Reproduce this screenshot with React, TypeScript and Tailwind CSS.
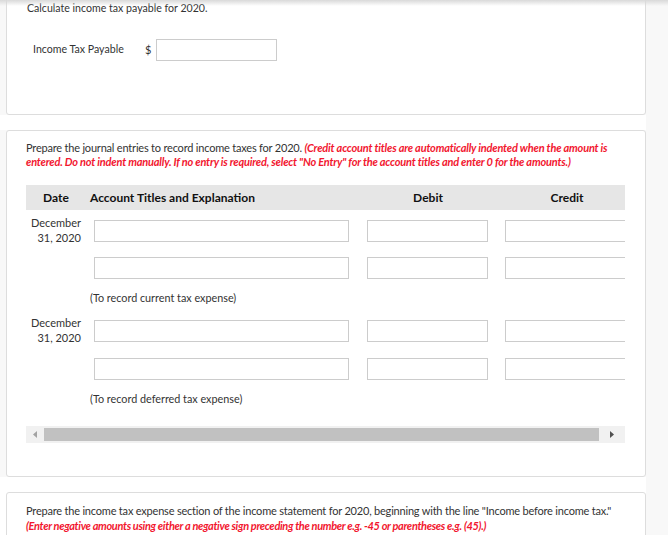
import React from "react";

const font = { fontFamily: "Lato, 'Open Sans', sans-serif" };

function Box({ className = "" }: { className?: string }) {
  return <div className={`h-[22px] border border-[#cccccc] bg-white ${className}`} />;
}

function EntryRow({ date, className = "" }: { date?: boolean; className?: string }) {
  return (
    <div className={`flex items-start h-[22px] ${className}`}>
      <div className="w-[55px] h-[27px] shrink-0 text-right text-[11px] leading-[15px] text-[#333] -mt-[5px]">
        {date && (
          <>
            December
            <br />
            31, 2020
          </>
        )}
      </div>
      <Box className="ml-[13px] w-[255px]" />
      <Box className="ml-[18px] w-[121px]" />
      <Box className="ml-[17px] w-[120px] border-r-0" />
    </div>
  );
}

export default function App() {
  return (
    <div className="relative w-[668px] h-[535px] overflow-hidden bg-white text-[#333]" style={font}>
      {/* top bar shadow */}
      <div className="absolute left-0 top-0 w-full h-[6px] bg-gradient-to-b from-[#d9d9d9] to-transparent z-10" />
      {/* right gutter */}
      <div className="absolute right-0 top-0 w-[22px] h-full bg-[#f8f8f8]" />

      {/* Card 1 */}
      <div className="flex -mt-[20px] bg-[#f8f8f8] w-[646px]">
        <div className="ml-[6px] w-[640px] h-[135px] bg-white border border-[#dddddd] rounded-[3px] px-[20px] pt-[20px]">
          <p className="text-[10.6px] leading-[14px]">Calculate income tax payable for 2020.</p>
          <div className="flex items-center mt-[24px] ml-[6px]">
            <span className="text-[10.6px] w-[112px]">Income Tax Payable</span>
            <span className="text-[11px] w-[11px]">$</span>
            <div className="h-[22px] w-[121px] border border-[#cccccc]" />
          </div>
        </div>
      </div>

      <div className="h-[15px]" />

      {/* Card 2 */}
      <div className="flex bg-[#f8f8f8] w-[646px]">
        <div className="ml-[6px] w-[640px] h-[347px] bg-white border border-[#dddddd] rounded-[3px] pl-[19px] pt-[10px]">
          <p className="text-[11px] leading-[14px] tracking-[-0.2px]">
            Prepare the journal entries to record income taxes for 2020.{" "}
            <em className="font-bold text-[#f2172f]">
              (Credit account titles are automatically indented when the amount is
              <br />
              entered. Do not indent manually. If no entry is required, select "No Entry" for the account titles and enter 0 for the amounts.)
            </em>
          </p>

          <div className="mt-[16px] w-[599px]">
            <div className="flex items-center h-[25px] bg-[#e6e6e6] text-[12px] font-bold text-[#111]">
              <span className="w-[60px] text-center">Date</span>
              <span className="w-[264px] pl-[4px]">Account Titles and Explanation</span>
              <span className="w-[156px] text-center">Debit</span>
              <span className="w-[119px] pl-[3px] text-center">Credit</span>
            </div>

            <div className="pt-[10px]">
              <EntryRow date />
              <EntryRow className="mt-[15px]" />
              <div className="mt-[12px] pl-[64px] text-[10.8px] leading-[14px]">(To record current tax expense)</div>
              <EntryRow date className="mt-[15px]" />
              <EntryRow className="mt-[16px]" />
              <div className="mt-[12px] pl-[64px] text-[10.8px] leading-[14px]">(To record deferred tax expense)</div>
            </div>

            {/* scrollbar */}
            <div className="mt-[20px] flex items-center h-[17px] bg-[#f1f1f1]">
              <div className="w-[18px] flex justify-center">
                <svg width="4" height="7" viewBox="0 0 4 7"><path d="M4 0 L0 3.5 L4 7 Z" fill="#a3a3a3" /></svg>
              </div>
              <div className="h-[13px] w-[555px] bg-[#c1c1c1]" />
              <div className="flex-1 flex justify-center">
                <svg width="4" height="7" viewBox="0 0 4 7"><path d="M0 0 L4 3.5 L0 7 Z" fill="#505050" /></svg>
              </div>
            </div>
          </div>
        </div>
      </div>

      <div className="h-[15px]" />

      {/* Card 3 */}
      <div className="flex w-[646px]">
        <div className="ml-[6px] w-[640px] h-[80px] bg-white border border-[#dddddd] rounded-[3px] pl-[19px] pt-[10px]">
          <p className="text-[11px] leading-[15px] tracking-[-0.2px]">
            Prepare the income tax expense section of the income statement for 2020, beginning with the line "Income before income tax."
            <br />
            <em className="font-bold text-[#f2172f] tracking-[-0.34px]">
              (Enter negative amounts using either a negative sign preceding the number e.g. -45 or parentheses e.g. (45).)
            </em>
          </p>
        </div>
      </div>
    </div>
  );
}
